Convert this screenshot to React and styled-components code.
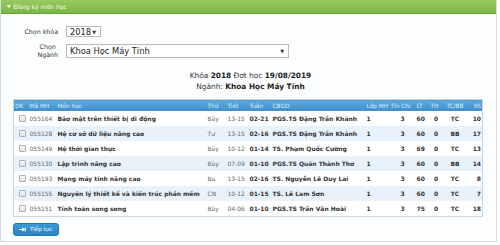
import React from 'react'
import styled, {createGlobalStyle} from "styled-components";

const GlobalStyle = createGlobalStyle`
  html, body {
    margin: 0;
    padding: 0;
    background: #ffffff;
    font-family: "DejaVu Sans", Verdana, sans-serif;
  }
`

const Panel = styled.section`
  width: 495px;
  border: 1px solid #d3dce6;
  border-top: none;
  background: #fcfdfe;
  padding-bottom: 5px;
`

const PanelHeader = styled.div`
  height: 13px;
  display: flex;
  align-items: center;
  gap: 3px;
  padding-left: 6px;
  background: linear-gradient(#98ca5f, #7bb447);
  border-bottom: 1px solid #6aa23a;
  color: #f4fbe9;
  font-size: 6.1px;

  .caret {
    font-size: 4.5px;
  }
`

const Form = styled.div`
  display: grid;
  grid-template-columns: 57px auto;
  column-gap: 8px;
  row-gap: 6px;
  align-items: center;
  padding-top: 12px;
`

const Label = styled.label`
  text-align: ${p => p.$center ? "center" : "right"};
  justify-self: end;
  font-size: 6.3px;
  line-height: 8px;
  color: #333;
`

const Select = styled.div`
  box-sizing: border-box;
  width: ${p => p.$width}px;
  height: ${p => p.$height}px;
  display: flex;
  align-items: center;
  justify-content: space-between;
  padding: 0 4px 0 3px;
  border: 1px solid #b9b9b9;
  background: #fff;
  font-size: 8.3px;
  color: #222;

  .arrow {
    font-size: 5px;
    color: #333;
  }
`

const Info = styled.div`
  margin-top: 11px;
  text-align: center;
  font-size: 7.4px;
  line-height: 11px;
  color: #333;
  padding-left: 4px;

  b {
    color: #222;
  }
`

const Table = styled.table`
  margin: 7px 0 0 12px;
  width: 469px;
  border-collapse: collapse;
  table-layout: fixed;
  border: 1px solid #c9d5e0;
  font-size: 6px;
  color: #444;
`

const HeadCell = styled.th`
  height: 11px;
  padding: 0 1px;
  background: linear-gradient(#5fa9dd, #3e8dcb);
  color: #dcedfa;
  font-weight: normal;
  font-size: 5.8px;
  text-align: ${p => p.$align || "left"};
  white-space: nowrap;
`

const Row = styled.tr`
  height: 15px;
  background: ${p => p.$alt ? "#e8f2fb" : "#ffffff"};
`

const Cell = styled.td`
  padding: 0 1px;
  text-align: ${p => p.$align || "left"};
  font-weight: ${p => p.$bold ? "bold" : "normal"};
  color: ${p => p.$bold ? "#333" : "#666"};
  white-space: nowrap;
  overflow: hidden;
`

const Check = styled.span`
  display: block;
  width: 7px;
  height: 7px;
  margin-left: 4px;
  box-sizing: border-box;
  border: 1px solid #a9b3bd;
  border-radius: 1px;
  background: linear-gradient(#fafafa, #dfe4e9);
`

const Button = styled.button`
  margin: 6px 0 0 12px;
  height: 13px;
  padding: 0 6px 0 5px;
  display: flex;
  align-items: center;
  gap: 4px;
  border: 1px solid #2277b0;
  border-radius: 3px;
  background: linear-gradient(#3d9ad6, #2a83c3);
  color: #fff;
  font-family: "DejaVu Sans", Verdana, sans-serif;
  font-size: 5.6px;
`

const cols = [15, 28, 150, 20, 22, 23, 94, 24, 26, 14, 13, 25, 15]

const heads = [
    ["DK"], ["Mã MH"], ["Môn học"], ["Thứ"], ["Tiết"], ["Tuần"], ["CBGD"],
    ["Lớp MH"], ["Tín Chỉ"], ["LT"], ["TH"], ["TC/BB", "center"], ["SS", "right"]
]

const courses = [
    ["055164", "Bảo mật trên thiết bị di động", "Bảy", "13-15", "02-21", "PGS.TS Đặng Trần Khánh", "60", "TC", "10"],
    ["055128", "Hệ cơ sở dữ liệu nâng cao", "Tư", "13-15", "02-16", "PGS.TS Đặng Trần Khánh", "60", "BB", "17"],
    ["055149", "Hệ thời gian thực", "Bảy", "10-12", "01-14", "TS. Phạm Quốc Cường", "69", "TC", "13"],
    ["055130", "Lập trình nâng cao", "Bảy", "07-09", "01-10", "PGS.TS Quản Thành Thơ", "60", "BB", "14"],
    ["055193", "Mạng máy tính nâng cao", "Ba", "13-15", "02-16", "TS. Nguyễn Lê Duy Lai", "60", "TC", "8"],
    ["055155", "Nguyên lý thiết kế và kiến trúc phần mềm", "CN", "10-12", "01-15", "TS. Lê Lam Sơn", "60", "TC", "7"],
    ["055151", "Tính toán song song", "Bảy", "04-06", "01-10", "PGS.TS Trần Văn Hoài", "75", "TC", "18"],
]

export default function App() {
    return (
        <>
            <GlobalStyle/>
            <Panel>
                <PanelHeader>
                    <span className="caret">▼</span>
                    <span>Đăng ký môn học</span>
                </PanelHeader>
                <Form>
                    <Label>Chọn khóa</Label>
                    <Select $width={35} $height={11}>
                        <span>2018</span><span className="arrow">▼</span>
                    </Select>
                    <Label $center>Chọn<br/>Ngành</Label>
                    <Select $width={223} $height={14}>
                        <span>Khoa Học Máy Tính</span><span className="arrow">▼</span>
                    </Select>
                </Form>
                <Info>
                    <div>Khóa <b>2018</b> Đợt học <b>19/08/2019</b></div>
                    <div>Ngành: <b>Khoa Học Máy Tính</b></div>
                </Info>
                <Table>
                    <colgroup>
                        {cols.map((w, i) => <col key={i} style={{width: w}}/>)}
                    </colgroup>
                    <thead>
                    <tr>
                        {heads.map(([t, a]) => <HeadCell key={t} $align={a}>{t}</HeadCell>)}
                    </tr>
                    </thead>
                    <tbody>
                    {courses.map((c, i) => (
                        <Row key={c[0]} $alt={i % 2 === 1}>
                            <Cell><Check/></Cell>
                            <Cell>{c[0]}</Cell>
                            <Cell $bold>{c[1]}</Cell>
                            <Cell>{c[2]}</Cell>
                            <Cell>{c[3]}</Cell>
                            <Cell $bold>{c[4]}</Cell>
                            <Cell $bold>{c[5]}</Cell>
                            <Cell $bold>1</Cell>
                            <Cell $bold $align="center">3</Cell>
                            <Cell $bold>{c[6]}</Cell>
                            <Cell $bold $align="center">0</Cell>
                            <Cell $bold $align="center">{c[7]}</Cell>
                            <Cell $bold $align="right">{c[8]}</Cell>
                        </Row>
                    ))}
                    </tbody>
                </Table>
                <Button>
                    <svg width="7" height="5" viewBox="0 0 7 5">
                        <path d="M0 2.5H5M3.3 0.8L5.2 2.5L3.3 4.2" stroke="#fff" strokeWidth="1.1" fill="none"/>
                        <path d="M6.3 0.5V4.5" stroke="#fff" strokeWidth="1"/>
                    </svg>
                    <span>Tiếp tục</span>
                </Button>
            </Panel>
        </>
    )
}
